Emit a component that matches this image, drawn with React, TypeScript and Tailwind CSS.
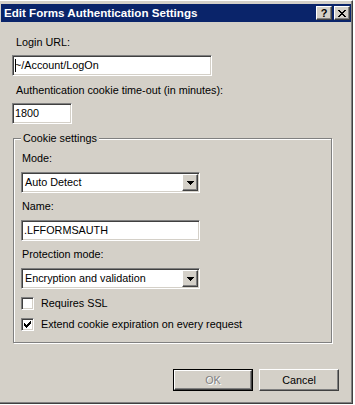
import React from "react";

const raised =
  "border border-t-white border-l-white border-r-[#404040] border-b-[#404040] shadow-[inset_-1px_-1px_0_#808080] bg-[#d4d0c8]";
const sunken =
  "border border-t-[#808080] border-l-[#808080] border-r-white border-b-white shadow-[inset_1px_1px_0_#404040,inset_-1px_-1px_0_#d4d0c8] bg-white";

const Label = ({ children }: { children: React.ReactNode }) => (
  <div className="h-[13px] leading-[13px] pl-px">{children}</div>
);

const TextBox = ({
  value,
  width,
  caret,
}: {
  value: string;
  width: string;
  caret?: boolean;
}) => (
  <div className={`${sunken} ${width} h-[21px] flex items-center pl-[2px]`}>
    {caret && <span className="w-px h-[13px] bg-black -mr-px" />}
    <span className="leading-[13px]">{value}</span>
  </div>
);

const Combo = ({ value }: { value: string }) => (
  <div className={`${sunken} w-[179px] h-[21px] flex items-center pl-[3px] pr-px`}>
    <span className="flex-1 leading-[13px]">{value}</span>
    <div className={`${raised} w-[16px] h-[17px] flex items-center justify-center`}>
      <svg width="7" height="4" viewBox="0 0 7 4" shapeRendering="crispEdges">
        <path d="M0 0h7v1h-1v1h-1v1h-1v1h-1v-1h-1v-1h-1v-1h-1z" fill="#000" />
      </svg>
    </div>
  </div>
);

const CheckBox = ({ checked, label }: { checked?: boolean; label: string }) => (
  <div className="flex items-center h-[13px]">
    <div className={`${sunken} w-[13px] h-[13px] flex items-center justify-center`}>
      {checked && (
        <svg width="7" height="7" viewBox="0 0 7 7" shapeRendering="crispEdges">
          <path
            d="M6 0h1v1h-1zM5 1h2v1h-2zM0 2h1v1h-1zM4 2h3v1h-3zM0 3h2v1h-2zM3 3h3v1h-3zM0 4h5v1h-5zM1 5h3v1h-3zM2 6h1v1h-1z"
            fill="#000"
          />
        </svg>
      )}
    </div>
    <span className="ml-[7px] leading-[13px]">{label}</span>
  </div>
);

export default function App() {
  return (
    <div className="w-[355px] h-[405px] bg-white font-['Liberation_Sans',Arial,sans-serif] text-[10.8px] text-black">
      <div className="w-[353px] h-[404px] bg-[#d4d0c8] border-t border-t-white border-r border-b border-r-[#404040] border-b-[#404040] shadow-[inset_-1px_-1px_0_#808080] pt-[3px] flex flex-col">
        {/* title bar */}
        <div className="ml-px mr-px h-[18px] bg-[#0a246a] flex items-center pl-[3px] pr-px">
          <span className="flex-1 text-white font-bold text-[11.6px] leading-[14px]">
            Edit Forms Authentication Settings
          </span>
          <div className={`${raised} w-[16px] h-[14px] flex items-center justify-center font-bold text-[11px] leading-none`}>
            ?
          </div>
          <div className={`${raised} ml-[2px] w-[16px] h-[14px] flex items-center justify-center`}>
            <svg width="8" height="7" viewBox="0 0 8 7" shapeRendering="crispEdges">
              <path
                d="M0 0h2v1h-2zM6 0h2v1h-2zM1 1h2v1h-2zM5 1h2v1h-2zM2 2h4v1h-4zM3 3h2v1h-2zM2 4h4v1h-4zM1 5h2v1h-2zM5 5h2v1h-2zM0 6h2v1h-2zM6 6h2v1h-2z"
                fill="#000"
              />
            </svg>
          </div>
        </div>

        {/* body */}
        <div className="flex flex-col pl-[12px] pr-[13px]">
          <div className="mt-[14px] ml-[3px]">
            <Label>Login URL:</Label>
          </div>
          <div className="mt-[6px]">
            <TextBox value="~/Account/LogOn" width="w-[200px]" caret />
          </div>
          <div className="mt-[8px] ml-[3px]">
            <Label>Authentication cookie time-out (in minutes):</Label>
          </div>
          <div className="mt-[6px]">
            <TextBox value="1800" width="w-[60px]" />
          </div>

          {/* group box */}
          <div className="relative mt-[14px] ml-px w-[319px] border border-[#808080] shadow-[inset_1px_1px_0_#fff,1px_1px_0_#fff] pl-[7px] pt-[13px] pb-[11px] flex flex-col">
            <div className="absolute left-[7px] -top-[7px] h-[13px] leading-[13px] px-[2px] bg-[#d4d0c8]">
              Cookie settings
            </div>
            <Label>Mode:</Label>
            <div className="mt-[7px]">
              <Combo value="Auto Detect" />
            </div>
            <div className="mt-[7px]">
              <Label>Name:</Label>
            </div>
            <div className="mt-[7px]">
              <TextBox value=".LFFORMSAUTH" width="w-[179px]" />
            </div>
            <div className="mt-[7px]">
              <Label>Protection mode:</Label>
            </div>
            <div className="mt-[7px]">
              <Combo value="Encryption and validation" />
            </div>
            <div className="mt-[8px]">
              <CheckBox label="Requires SSL" />
            </div>
            <div className="mt-[8px]">
              <CheckBox checked label="Extend cookie expiration on every request" />
            </div>
          </div>

          {/* buttons */}
          <div className="mt-[26px] flex justify-end gap-[6px]">
            <div className="w-[80px] h-[22px] border border-black">
              <div className={`${raised} w-full h-full flex items-center justify-center text-[#808080] [text-shadow:1px_1px_0_#fff]`}>
                OK
              </div>
            </div>
            <div className={`${raised} w-[80px] h-[22px] flex items-center justify-center`}>
              Cancel
            </div>
          </div>
        </div>
      </div>
    </div>
  );
}
